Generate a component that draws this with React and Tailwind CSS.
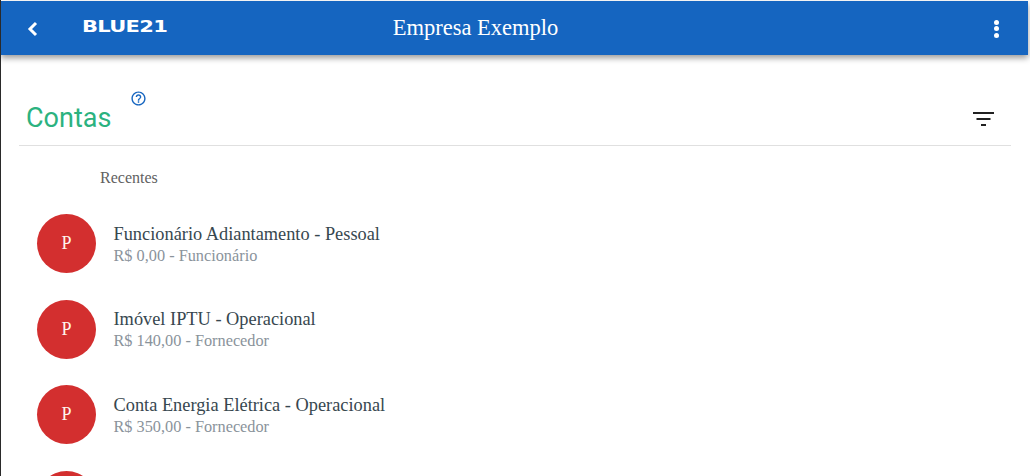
import React from 'react';

const contas = [
    { titulo: 'Funcionário Adiantamento - Pessoal', sub: 'R$ 0,00 - Funcionário' },
    { titulo: 'Imóvel IPTU - Operacional', sub: 'R$ 140,00 - Fornecedor' },
    { titulo: 'Conta Energia Elétrica - Operacional', sub: 'R$ 350,00 - Fornecedor' },
];

const Avatar = ({ letra }) => (
    <div className="w-[59px] h-[59px] rounded-full bg-[#d32f2f] flex items-center justify-center text-[#fff5ee] text-[18px] shrink-0">
        {letra}
    </div>
);

const ContaItem = ({ titulo, sub }) => (
    <div className="flex items-center h-[85.5px] pl-[36px] shrink-0">
        <Avatar letra="P" />
        <div className="ml-[17.5px] mt-[1px]">
            <div className="text-[18.35px] leading-[22px] text-[#37474f] whitespace-nowrap">{titulo}</div>
            <div className="text-[16.3px] leading-[20px] mt-[1px] text-[#8a939b] whitespace-nowrap">{sub}</div>
        </div>
    </div>
);

export default function App() {
    return (
        <div className="w-[1030px] h-[476px] overflow-hidden bg-white flex flex-col border-l border-[#2a2a2a] font-['Liberation_Serif',serif]">
            <header className="h-[54px] shrink-0 mt-[1px] bg-[#1565c0] shadow-[0_3px_6px_rgba(0,0,0,0.4)] flex items-center relative z-10 mr-[2px]">
                <div className="w-[81px] flex pl-[26px] mt-[1px]">
                    <svg width="11" height="16" viewBox="0 0 11 16" fill="none" stroke="white" strokeWidth="3">
                        <path d="M9 2 L3 8 L9 14" />
                    </svg>
                </div>
                <div className="w-[85px] h-[14px] flex items-center mb-[2px]">
                    <span className="text-white text-[15px] font-bold leading-none font-['DejaVu_Sans',sans-serif] origin-left scale-x-[1.4] tracking-[-0.5px] whitespace-nowrap">
                        BLUE21
                    </span>
                </div>
                <div className="flex-1 text-center text-white text-[22.5px] pr-[266px] pl-[56px]">Empresa Exemplo</div>
                <div className="flex flex-col gap-[1.5px] pr-[29px] mt-[1px]">
                    <span className="w-[5px] h-[5px] rounded-full bg-white" />
                    <span className="w-[5px] h-[5px] rounded-full bg-white" />
                    <span className="w-[5px] h-[5px] rounded-full bg-white" />
                </div>
            </header>

            <div className="h-[91px] ml-[18px] mr-[19px] shrink-0 border-b border-[#e0e0e0] flex items-end justify-between">
                <div className="flex items-start pl-[7px] pb-[11px]">
                    <span className="font-['Roboto',sans-serif] text-[27px] leading-[32px] text-[#2bb27f]">Contas</span>
                    <svg className="ml-[18.5px] -mt-[12px]" width="17" height="17" viewBox="0 0 24 24" fill="#1565c0">
                        <path d="M11 18h2v-2h-2v2zm1-16C6.48 2 2 6.48 2 12s4.48 10 10 10 10-4.48 10-10S17.52 2 12 2zm0 18c-4.41 0-8-3.59-8-8s3.59-8 8-8 8 3.59 8 8-3.59 8-8 8zm0-14c-2.21 0-4 1.79-4 4h2c0-1.1.9-2 2-2s2 .9 2 2c0 2-3 1.75-3 5h2c0-2.25 3-2.5 3-5 0-2.21-1.79-4-4-4z" />
                    </svg>
                </div>
                <svg className="mr-[17px] mb-[19px]" width="21" height="14" viewBox="0 0 21 14" fill="#212121">
                    <rect x="0" y="0" width="21" height="2" />
                    <rect x="3.5" y="6" width="14" height="2" />
                    <rect x="8" y="12" width="5" height="2" />
                </svg>
            </div>

            <div className="pl-[99px] pt-[23px] text-[16px] leading-[18px] text-[#616161] shrink-0">Recentes</div>
            <div className="flex flex-col mt-[14px]">
                {contas.map((c) => (
                    <ContaItem key={c.titulo} titulo={c.titulo} sub={c.sub} />
                ))}
                {/* quarta linha aparece so o topo do circulo */}
                <div className="flex items-center h-[85.5px] pl-[36px] shrink-0">
                    <div className="w-[59px] h-[59px] rounded-full bg-[#d32f2f] shrink-0" />
                </div>
            </div>
        </div>
    );
}
